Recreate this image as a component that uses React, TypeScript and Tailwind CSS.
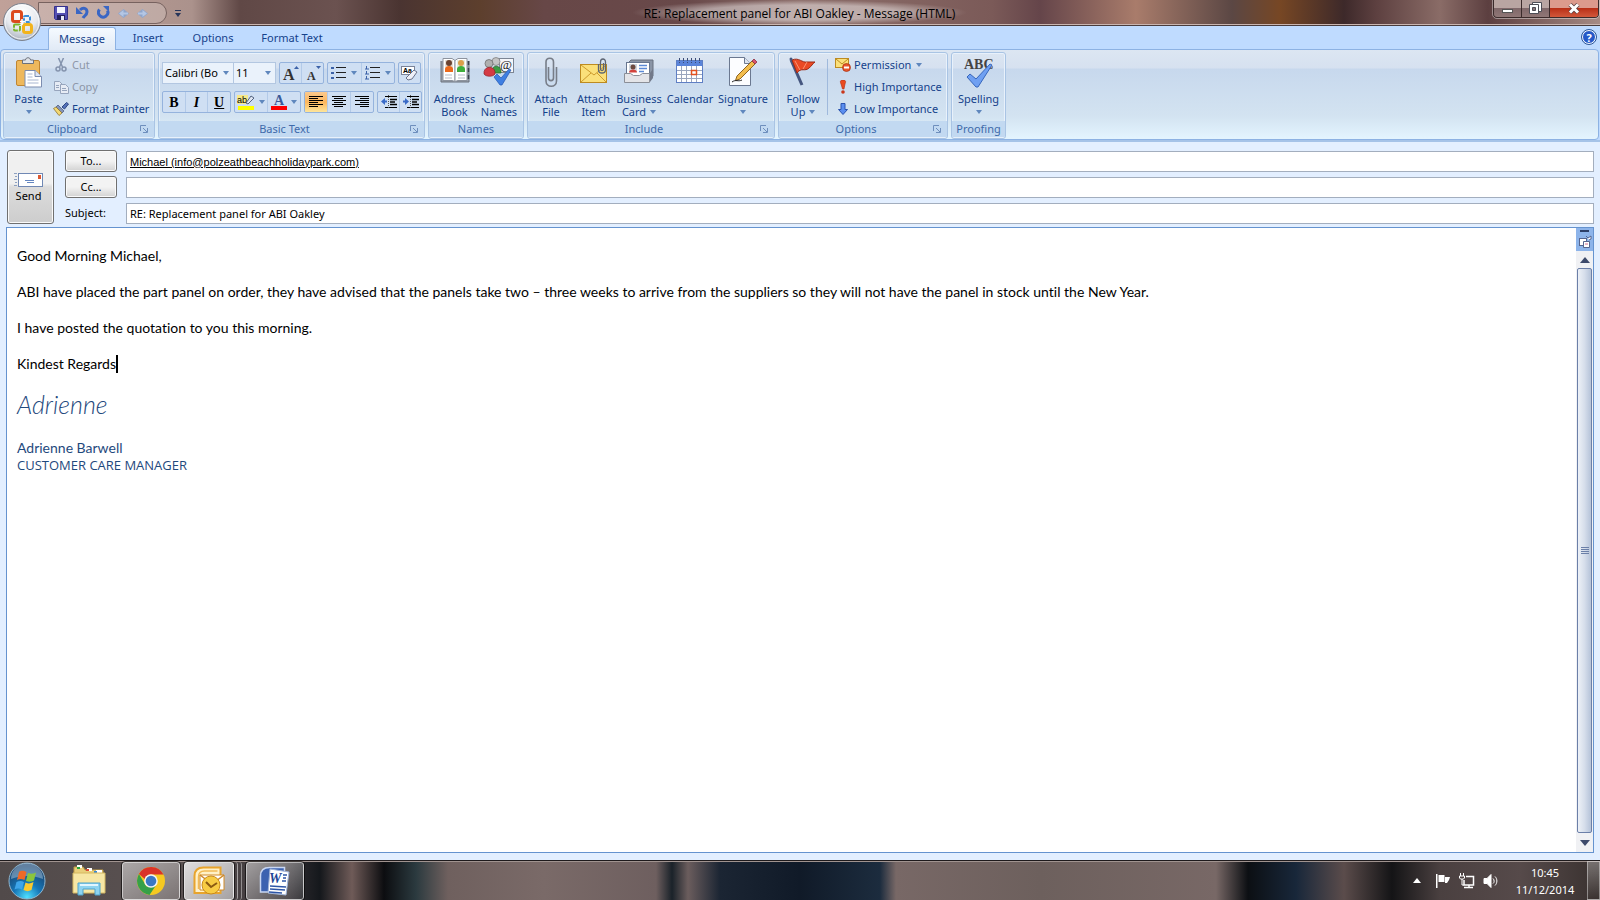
import React from 'react';

type IconProps = { className?: string };

const Caret = ({ className = 'text-[#5f87bd]' }: IconProps) => (
  <svg width="6" height="4" viewBox="0 0 6 4" className={`shrink-0 ${className}`}>
    <path d="M0 0h6L3 4z" fill="currentColor" />
  </svg>
);

const LauncherIcon = () => (
  <svg width="8" height="8" viewBox="0 0 8 8" fill="none" stroke="#6f8fbd">
    <path d="M0.5 6V0.5H6M3 3l4 4M7.500 3v4.500H3" />
  </svg>
);

/* ---------- title bar icons ---------- */

const OfficeOrb = () => (
  <svg width="40" height="40" viewBox="0 0 40 40">
    <defs>
      <radialGradient id="orb" cx="50%" cy="25%" r="75%">
        <stop offset="0" stopColor="#ffffff" />
        <stop offset="0.6" stopColor="#e6e9ee" />
        <stop offset="1" stopColor="#a9b1be" />
      </radialGradient>
    </defs>
    <circle cx="20" cy="20" r="18.500" fill="url(#orb)" stroke="#7c828e" />
    <circle cx="20" cy="20" r="17" fill="none" stroke="#fff" strokeOpacity="0.8" />
    <rect x="10.500" y="9.500" width="9" height="10" rx="2" fill="none" stroke="#dc4a1e" strokeWidth="3" />
    <rect x="22" y="14" width="6" height="6" rx="1" fill="none" stroke="#3d8fd8" strokeWidth="2" strokeDasharray="4 1" />
    <rect x="12" y="22.500" width="6" height="6" rx="1" fill="none" stroke="#7cb52c" strokeWidth="2" strokeDasharray="5 1" />
    <rect x="21.500" y="22.500" width="8" height="8" rx="2" fill="none" stroke="#f2b31c" strokeWidth="3" />
    <path d="M18 19.500h5M20 17v6" stroke="#fff" strokeWidth="1.500" />
  </svg>
);

const SaveIcon = () => (
  <svg width="14" height="14" viewBox="0 0 14 14">
    <path d="M0.500 0.500h13v13h-12l-1-1z" fill="#5550b4" stroke="#35318c" />
    <rect x="3" y="1" width="8" height="6" fill="#f3f5ff" />
    <rect x="3" y="9" width="8" height="5" fill="#23205f" />
    <rect x="7" y="10" width="3" height="4" fill="#e8eaf8" />
  </svg>
);

const UndoIcon = () => (
  <svg width="13" height="14" viewBox="0 0 13 14" fill="none">
    <path d="M4 4c3-3 7-2 7 2 0 3-3 4-4 6" stroke="#3a66c4" strokeWidth="3" />
    <path d="M0 1v7h7z" fill="#3a66c4" />
  </svg>
);

const RedoIcon = () => (
  <svg width="13" height="14" viewBox="0 0 13 14" fill="none">
    <path d="M2.500 3.500A4.700 4.700 0 1 0 10.500 4.500" stroke="#3a66c4" strokeWidth="3" />
    <path d="M6 0h6v6z" fill="#3a66c4" />
  </svg>
);

const DiamondArrow = ({ className = '' }: IconProps) => (
  <svg width="11" height="9" viewBox="0 0 11 9" className={className}>
    <path d="M0 4.500L5.500 0 11 4.500 5.500 9z" fill="#8fa5cb" />
    <path d="M1 4.500L5.500 1v2.500H10v2H5.500V8z" fill="#b4c6e4" />
  </svg>
);

/* ---------- ribbon icons ---------- */

const PasteIcon = () => (
  <svg width="28" height="32" viewBox="0 0 28 32">
    <rect x="1.500" y="3.500" width="23" height="25" rx="1.500" fill="#eeb85c" stroke="#bf8532" />
    <path d="M7.500 6.500V3h3c0-3 5-3 5 0h3v3.500z" fill="#dfe2e7" stroke="#6c717b" />
    <path d="M10 13.500h10l6.500 6V30H10z" fill="#fff" stroke="#7c8db0" />
    <path d="M20 13.500v6h6.500" fill="#dde5f3" stroke="#7c8db0" />
    <path d="M12.500 17h5M12.500 20h5M12.500 23h11M12.500 26h11" stroke="#a8b6d1" />
  </svg>
);

const CutIcon = () => (
  <svg width="12" height="14" viewBox="0 0 12 14" fill="none" stroke="#8493ad" strokeWidth="1.500">
    <path d="M3.500 0l4 9M8.500 0l-4 9" />
    <circle cx="3" cy="11" r="2" />
    <circle cx="9" cy="11" r="2" />
  </svg>
);

const CopyIcon = () => (
  <svg width="15" height="13" viewBox="0 0 15 13" fill="#e7ecf5" stroke="#97a5bd">
    <path d="M0.500 0.500h5l3 3v6h-8z" />
    <path d="M6.500 3.500h5l3 3v6h-8z" />
    <path d="M2 4.500h3M2 6.500h3M8 7.500h4M8 9.500h5" />
  </svg>
);

const PainterIcon = () => (
  <svg width="16" height="14" viewBox="0 0 16 14">
    <path d="M9 5l4.500-4.500 2 1.500-4 5z" fill="#5472b8" stroke="#2d4784" />
    <path d="M5 3l6 6-2 2-6-6z" fill="#8494b8" stroke="#44557d" strokeWidth="0.700" />
    <path d="M3 5l6 6-3 2.500L0.500 6.500z" fill="#f2d873" stroke="#8f7430" strokeWidth="0.800" />
  </svg>
);

const BulletsIcon = ({ numbered = false }: { numbered?: boolean }) => (
  <svg width="16" height="14" viewBox="0 0 16 14">
    {[1, 6, 11].map((y) => (
      <g key={y}>
        {numbered ? (
          <path d={`M1.500 ${y - 1}v3M0 ${y + 2}h4`} stroke="#3c62a8" fill="none" />
        ) : (
          <rect x="0" y={y} width="3" height="2" fill="#3c62a8" />
        )}
        <rect x="5" y={y} width="10" height="1" fill="#222" />
      </g>
    ))}
  </svg>
);

const AlignIcon = ({ align }: { align: 'left' | 'center' | 'right' }) => (
  <svg width="14" height="12" viewBox="0 0 14 12" fill="#000">
    {[0, 2, 4, 6, 8, 10].map((y, i) => {
      const w = i % 2 ? 9 : 14;
      const x = align === 'left' ? 0 : align === 'right' ? 14 - w : (14 - w) / 2;
      return <rect key={y} x={Math.floor(x)} y={y} width={w} height="1" />;
    })}
  </svg>
);

const IndentIcon = ({ out = false }: { out?: boolean }) => (
  <svg width="16" height="14" viewBox="0 0 16 14">
    <path d="M4 1.500h12M4 12.500h12" stroke="#000" />
    <path d="M9 4.500h7M9 7h5M9 9.500h7" stroke="#000" strokeWidth="1.500" />
    <path d="M7.500 0v14" stroke="#555" strokeDasharray="1 1" />
    <path d={out ? 'M0 6.500L4 3v2.500h2v2H4V10z' : 'M6 6.500L2 3v2.500H0v2h2V10z'} fill="#3a6bc8" />
  </svg>
);

const GrowIcon = ({ shrink = false }: { shrink?: boolean }) => (
  <svg width="18" height="18" viewBox="0 0 18 18">
    <text
      x={shrink ? 3 : 1}
      y="16"
      fontSize={shrink ? 12 : 16}
      fontWeight="bold"
      fontFamily="Liberation Serif"
      fill="#333"
    >
      A
    </text>
    <path d={shrink ? 'M12 2h5l-2.500 3z' : 'M12 5h5l-2.500-3z'} fill="#3c62a8" />
  </svg>
);

const ClearIcon = () => (
  <svg width="17" height="16" viewBox="0 0 17 16">
    <rect x="0.500" y="1.500" width="13" height="8" fill="#fff" stroke="#7b8499" />
    <text x="2" y="8" fontSize="7" fontWeight="bold" fontFamily="Liberation Sans">Aa</text>
    <path d="M13 5l3 2-5 7-4 1-2-2z" fill="#eef0f8" stroke="#6a728a" />
  </svg>
);

const HighlightIcon = () => (
  <svg width="18" height="16" viewBox="0 0 18 16" className="overflow-visible">
    <rect x="0" y="1" width="11" height="9" fill="#f7e98a" />
    <text x="0" y="9" fontSize="9" fontFamily="Liberation Sans">ab</text>
    <path d="M9 9l5-7 3 2-6 6z" fill="#dfe6f3" stroke="#53637f" />
    <rect x="1" y="12" width="16" height="4" fill="#ffff00" />
  </svg>
);

const FontColorIcon = () => (
  <svg width="16" height="16" viewBox="0 0 16 16" className="overflow-visible">
    <text x="3" y="11" fontSize="14" fontWeight="bold" fill="#3b5a99" fontFamily="Liberation Serif">A</text>
    <rect x="0" y="12" width="16" height="4" fill="#f00" />
  </svg>
);

const AddressBookIcon = () => (
  <svg width="30" height="28" viewBox="0 0 30 28">
    <path d="M1 4v21h28V4" fill="#9aa2ae" stroke="#6c727c" />
    <path d="M3 1.500h9l3 2v21l-3-1H3z" fill="#fff" stroke="#8d939e" />
    <path d="M27 1.500h-9l-3 2v21l3-1h9z" fill="#fff" stroke="#8d939e" />
    <path d="M28.500 4v4M28.500 11v4M28.500 18v4" stroke="#39404c" strokeWidth="1.500" />
    <rect x="5" y="3" width="8" height="12" fill="#e6e1da" />
    <circle cx="9" cy="6" r="3" fill="#6b4230" />
    <path d="M5 15v-3c0-4 8-4 8 0v3z" fill="#ec6a1c" />
    <rect x="17" y="3" width="8" height="12" fill="#e6ede0" />
    <circle cx="21" cy="6" r="3" fill="#dba04a" />
    <path d="M17 15v-3c0-4 8-4 8 0v3z" fill="#3fae3c" />
    <path d="M5 18h7M5 21h7M18 18h7M18 21h7" stroke="#b4bbc7" />
  </svg>
);

const CheckNamesIcon = () => (
  <svg width="32" height="30" viewBox="0 0 32 30">
    <rect x="16.500" y="1.500" width="14" height="14" fill="#f4f6fa" stroke="#7c8594" />
    <text x="17" y="12" fontSize="13" fontFamily="Liberation Serif" fill="#222">@</text>
    <circle cx="13" cy="4.500" r="4" fill="#c4c4c4" stroke="#777" strokeWidth="0.700" />
    <path d="M8 16c0-9 11-9 10 0z" fill="#3c9c44" stroke="#27692d" strokeWidth="0.700" />
    <circle cx="6" cy="6.500" r="4" fill="#b0b0b0" stroke="#666" strokeWidth="0.700" />
    <path d="M1 17c-1-9 12-9 11 0-2 3-9 3-11 0z" fill="#d43a44" stroke="#8e232b" strokeWidth="0.700" />
    <path d="M11 20l3-3 4 4 8-9 2 1-9 15h-2z" fill="#3f7fe2" stroke="#2457b0" strokeWidth="0.700" />
  </svg>
);

const PaperclipIcon = () => (
  <svg width="14" height="31" viewBox="0 0 14 31" fill="none" stroke="#777d88" strokeWidth="1.600">
    <path d="M4.500 10v11c0 3.500 5 3.500 5 0V5c0-5-7.500-5-7.500 0v19c0 7 10.500 7 10.500 0V10" />
  </svg>
);

const AttachItemIcon = () => (
  <svg width="28" height="28" viewBox="0 0 28 28">
    <rect x="0.500" y="7.500" width="26" height="18" fill="#fbe07a" stroke="#bd8b21" />
    <path d="M1 8l13 10L26 8M1 25l10-9M26 25l-9-9" fill="none" stroke="#cd9a2c" />
    <path d="M18.500 7v6c0 4 7 4 7 0V5c0-4-5-4-5 0v7c0 2 3 2 3 0V6" fill="none" stroke="#5d6573" strokeWidth="1.300" />
  </svg>
);

const BusinessCardIcon = () => (
  <svg width="30" height="28" viewBox="0 0 30 28">
    <path d="M4 6l3-3h22v16l-4 5H4z" fill="#8b95a6" stroke="#69717f" />
    <rect x="2.500" y="5.500" width="23" height="14" fill="#fff" stroke="#67768f" />
    <rect x="5" y="7" width="8" height="8" fill="#cfd5de" />
    <circle cx="9" cy="10" r="2.500" fill="#6b4a40" />
    <path d="M5 15.500c0-4 8-4 8 0z" fill="#d3433c" />
    <path d="M15 8.500h8M15 11.500h8M15 14.500h5" stroke="#5c8ad6" strokeWidth="1.500" />
    <path d="M0.500 16.500h6l3 2h6l3-2h7v9h-25z" fill="#e3e4e8" stroke="#8b8f98" />
    <path d="M26 16l3-4v9l-3 4z" fill="#72798a" />
  </svg>
);

const CalendarIcon = () => (
  <svg width="28" height="27" viewBox="0 0 28 27">
    <rect x="0.500" y="3.500" width="26" height="22" fill="#fff" stroke="#5f7fc4" />
    <rect x="1" y="4" width="25" height="5" fill="#5b84da" />
    <path d="M3.500 1v5M7.500 1v5M11.500 1v5M15.500 1v5M19.500 1v5M23.500 1v5" stroke="#3d4e78" strokeDasharray="3 1" />
    <path d="M1 13.500h25M1 17.500h25M1 21.500h25M5.500 9v16M10.500 9v16M15.500 9v16M20.500 9v16" stroke="#9aa6be" />
    <rect x="15.500" y="13.500" width="5" height="4" fill="#fff" stroke="#e2501d" strokeWidth="1.500" />
  </svg>
);

const SignatureIcon = () => (
  <svg width="30" height="30" viewBox="0 0 30 30">
    <path d="M1.500 0.500h15l6 6v22h-21z" fill="#fcfdff" stroke="#6b7890" />
    <path d="M16.500 0.500v6h6" fill="#dce3ef" stroke="#6b7890" />
    <path d="M9 19L24 4l3 3-15 15-4.500 1.500z" fill="#f3bd4d" stroke="#8f6520" />
    <path d="M24 4l2-2 3 3-2 2z" fill="#d9546c" stroke="#8a2f43" strokeWidth="0.800" />
    <path d="M4 25c4-3 6 0 10-2" stroke="#222" fill="none" />
  </svg>
);

const FlagIcon = () => (
  <svg width="28" height="29" viewBox="0 0 28 29">
    <path d="M2 3l11 25" stroke="#45567f" strokeWidth="3" />
    <path d="M3 3c7-3 10 3 15 2l8 0c-3 2-3 4-6 6-4 4-8-1-12 5z" fill="#ea4a25" stroke="#9c2a16" />
    <path d="M6 4l5 9M18 5l-4 7" stroke="#f99474" fill="none" />
    <circle cx="2" cy="2" r="1.500" fill="#45567f" />
  </svg>
);

const PermissionIcon = () => (
  <svg width="16" height="14" viewBox="0 0 16 14">
    <rect x="0.500" y="0.500" width="13" height="9" fill="#fbe07a" stroke="#bd8b21" />
    <path d="M1 1l6 5 6-5" fill="none" stroke="#bd8b21" />
    <circle cx="11.500" cy="9.500" r="4" fill="#e8552c" stroke="#a33113" strokeWidth="0.700" />
    <rect x="9" y="8.500" width="5" height="2" fill="#fff" />
  </svg>
);

const HighIcon = () => (
  <svg width="16" height="14" viewBox="0 0 16 14">
    <path d="M8 0c3 0 3 2 2 4L9 9H7.500L6 4C5 2 5 0 8 0z" fill="#ea4b20" stroke="#b22c0d" strokeWidth="0.600" />
    <circle cx="8" cy="12" r="1.800" fill="#c9361a" />
  </svg>
);

const LowIcon = () => (
  <svg width="16" height="14" viewBox="0 0 16 14">
    <path d="M6 1.500h4v6h2.500L8 12.500 3.500 7.500H6z" fill="#5a8ef0" stroke="#2a53ae" />
  </svg>
);

const SpellingIcon = () => (
  <svg width="32" height="32" viewBox="0 0 32 32" className="overflow-visible">
    <text x="1" y="12" fontSize="14" fontWeight="bold" fontFamily="Liberation Serif" fill="#444">ABC</text>
    <path d="M4 20l3-3 6 5L27 7l2 1-14 22h-2z" fill="#6fa0f2" stroke="#3767bd" />
  </svg>
);

const SendIcon = () => (
  <svg width="30" height="15" viewBox="0 0 30 15">
    <path d="M0 0.500h3M1 3.500h2M0 6.500h3M1 9.500h2M0 12.500h3" stroke="#8da0c0" />
    <rect x="4.500" y="0.500" width="24" height="13" fill="#fff" stroke="#7088b4" />
    <rect x="24" y="2" width="3" height="4" fill="#dd5a33" />
    <path d="M11 7.500h9M13 9.500h7" stroke="#6486c0" />
  </svg>
);

const BrowseIcon = () => (
  <svg width="14" height="14" viewBox="0 0 14 14" fill="#fff" stroke="#55658f">
    <rect x="1.500" y="3.500" width="7" height="7" />
    <path d="M5.500 6.500h6v6h-6zM8 1l2 2 3-2v3l-2 1" />
    <path d="M7 9h3" stroke="#d06a8c" />
  </svg>
);

/* ---------- taskbar icons ---------- */

const StartOrb = () => (
  <svg width="38" height="38" viewBox="0 0 38 38">
    <defs>
      <radialGradient id="start" cx="50%" cy="95%" r="85%">
        <stop offset="0" stopColor="#4fe0ff" />
        <stop offset="0.450" stopColor="#1677b8" />
        <stop offset="1" stopColor="#1a3f6a" />
      </radialGradient>
    </defs>
    <circle cx="19" cy="19" r="18" fill="url(#start)" stroke="#8fb6cf" />
    <path d="M3 17a16 16 0 0 1 32 0c-10-4-22-4-32 0z" fill="#cfe6f5" fillOpacity="0.400" />
    <path d="M11 10c3-2 5-1 7.500 0l-2 8c-3-1.500-5-1.500-7.500 0z" fill="#ee6a28" />
    <path d="M20 11c3 1 5 1 8-0.500l-2 8c-3 1.500-5 1.500-8 0.500z" fill="#8ac63c" />
    <path d="M8.500 20c3-1.500 5-1.500 7.500 0l-2 7.500c-2.500-1.500-5-1.500-7.500 0z" fill="#3ea5ea" />
    <path d="M17.500 20.500c3 1.500 5 1 8-0.500l-2 8c-3 1.500-5 1.500-8 0z" fill="#fcc92e" />
  </svg>
);

const ExplorerIcon = () => (
  <svg width="34" height="32" viewBox="0 0 34 32">
    <path d="M2 4V2h9l2 3h18v22H2z" fill="#e9cf7b" stroke="#bf9c45" />
    <path d="M5 1.500h5M15 4.500h5M24 6.500h6" stroke="#fff" strokeWidth="3" />
    <path d="M5 3h3" stroke="#2ba33b" strokeWidth="2" />
    <path d="M14 5h3" stroke="#dc4a35" strokeWidth="2" />
    <path d="M22 7h3" stroke="#3588d8" strokeWidth="2" />
    <path d="M1 8h32v20H1z" fill="#f7e7a5" stroke="#d4b862" />
    <path d="M6 30V18h22v12h-5v-6H11v6z" fill="#8ed4f0" stroke="#4fa2cb" />
    <path d="M8 20h18" stroke="#e1f6ff" strokeWidth="2" />
  </svg>
);

const ChromeIcon = () => (
  <svg width="30" height="30" viewBox="0 0 30 30">
    <circle cx="15" cy="15" r="14" fill="#f6c921" />
    <path d="M2.900 8A14 14 0 0 1 27.500 8.500H15a6.500 6.500 0 0 0-6.200 4.500z" fill="#da3328" />
    <path d="M2.900 8A14 14 0 0 0 13.500 28.900L19.500 20l-9 0.500z" fill="#36a048" />
    <circle cx="15" cy="15" r="6.800" fill="#f4f4f4" />
    <circle cx="15" cy="15" r="5.300" fill="#3b78c4" />
  </svg>
);

const OutlookIcon = () => (
  <svg width="32" height="30" viewBox="0 0 32 30">
    <path d="M1.500 27V10c0-5 3-8.500 9-8.500h17V27z" fill="#fff1c8" stroke="#e8a42c" strokeWidth="2" />
    <path d="M5.500 23V11c0-4 2-6 6-6h13" fill="none" stroke="#f2bb55" strokeWidth="1.500" />
    <path d="M7 9h24v15H7z" fill="#fff" stroke="#d08a29" />
    <path d="M7 9l12 9L31 9" fill="none" stroke="#d08a29" strokeWidth="1.500" />
    <circle cx="18" cy="19" r="9" fill="#f8cc44" stroke="#c98a1a" />
    <path d="M13 16l5 5 6-4" fill="none" stroke="#8b5a12" strokeWidth="2" />
  </svg>
);

const WordIcon = () => (
  <svg width="32" height="30" viewBox="0 0 32 30">
    <path d="M1.500 26V10c0-5 3-8.500 9-8.500h15V26z" fill="#3c62b0" stroke="#c8d6f2" strokeWidth="1.500" />
    <path d="M11 3l19 3-3 23-18-2z" fill="#fff" stroke="#9fb3d8" />
    <text x="10" y="17" fontSize="14" fontWeight="bold" fontStyle="italic" fontFamily="Liberation Serif" fill="#1e4596">W</text>
    <path d="M24 9h4M24 12h3M23 15h4M11 20l16 1M11 23l15 1M10 26l13 1" stroke="#2d55a6" strokeWidth="1.500" />
  </svg>
);

const TrayFlag = () => (
  <svg width="16" height="16" viewBox="0 0 16 16" fill="#fff">
    <path d="M1 1h1.500v14H1zM3.500 2h6v7h-6zM10 4h5l-1 3-2 3H10z" />
  </svg>
);

const TrayNetwork = () => (
  <svg width="16" height="16" viewBox="0 0 16 16" fill="none" stroke="#fff" strokeWidth="1.500">
    <path d="M7 3.500h7.500v8.500H5V7" />
    <path d="M5 14.500h9M10 12v2" />
    <path d="M1.500 0v3M4.500 0v3M0.500 3h5v2c0 1.500-5 1.500-5 0zM3 6v6h2" strokeWidth="1" />
  </svg>
);

const TraySpeaker = () => (
  <svg width="16" height="16" viewBox="0 0 16 16" fill="none" stroke="#fff">
    <path d="M1 5.500h3l4-4v13l-4-4H1z" fill="#fff" />
    <path d="M10 5.500c1.500 1.500 1.500 4 0 5M12 3.500c2.500 2.500 2.500 6.500 0 9" />
  </svg>
);

/* ---------- ribbon building blocks ---------- */

interface GroupProps {
  label: string;
  className: string;
  launcher?: boolean;
  children: React.ReactNode;
}

const RibbonGroup: React.FC<GroupProps> = ({ label, className, launcher, children }) => (
  <section
    aria-label={label}
    className={`flex flex-col shrink-0 rounded-[3px] border border-[#a9c4e4] shadow-[inset_0_0_0_1px_#e8f1fb] overflow-hidden ${className}`}
  >
    <div className="h-[68px] flex">{children}</div>
    <div className="h-4 flex items-center bg-[#c2d9f1] text-[#3e6aaa] text-center">
      <span className="flex-1">{label}</span>
      {launcher && (
        <button aria-label={`${label} dialog`} className="w-[14px] flex">
          <LauncherIcon />
        </button>
      )}
    </div>
  </section>
);

interface BigButtonProps {
  icon: React.ReactNode;
  lines: string[];
  className: string;
  caret?: 'below' | 'inline';
}

const BigButton: React.FC<BigButtonProps> = ({ icon, lines, className, caret }) => (
  <button className={`flex flex-col items-center shrink-0 pt-1 whitespace-nowrap leading-[13px] ${className}`}>
    <span className="h-[35px] flex items-start">{icon}</span>
    {lines.map((line, i) => (
      <span key={line} className="flex items-center gap-1">
        {line}
        {caret === 'inline' && i === lines.length - 1 && <Caret />}
      </span>
    ))}
    {caret === 'below' && <span className="h-[13px] flex items-center"><Caret /></span>}
  </button>
);

interface SmallButtonProps {
  icon: React.ReactNode;
  label: string;
  disabled?: boolean;
  caret?: boolean;
}

const SmallButton: React.FC<SmallButtonProps> = ({ icon, label, disabled, caret }) => (
  <button disabled={disabled} className="h-[22px] flex items-center gap-[3px] whitespace-nowrap disabled:text-[#8d97a8]">
    <span className="w-4 flex justify-center">{icon}</span>
    {label}
    {caret && <span className="pl-[2px]"><Caret /></span>}
  </button>
);

const ToolStrip = ({ children, className = '' }: { children: React.ReactNode; className?: string }) => (
  <div className={`h-[22px] flex shrink-0 rounded-[2px] border border-[#95b3dd] bg-[#cfdff3] divide-x divide-[#b3cae8] overflow-hidden ${className}`}>
    {children}
  </div>
);

interface ToolProps {
  label: string;
  children: React.ReactNode;
  active?: boolean;
}

const Tool: React.FC<ToolProps> = ({ label, children, active }) => (
  <button
    aria-label={label}
    title={label}
    className={`flex-1 flex items-center justify-center gap-1 ${active ? 'bg-linear-to-b from-[#fbc98d] via-[#fbb65d] to-[#fde59a]' : ''}`}
  >
    {children}
  </button>
);

const Combo = ({ label, value, className }: { label: string; value: string; className: string }) => (
  <div className={`relative h-[22px] border border-[#b3c7e1] bg-[#eaf2fb] ${className}`}>
    <select aria-label={label} className="appearance-none w-full h-full pl-[2px] pr-2 bg-transparent text-black outline-none">
      <option>{value}</option>
    </select>
    <span className="absolute right-1 top-2 pointer-events-none"><Caret /></span>
  </div>
);

/* ---------- window parts ---------- */

const TitleBar = () => (
  <header className="relative h-[26px] flex items-start justify-between border-b border-[#4a3c3c] shadow-[inset_0_-1px_0_#c9b5b0] bg-[linear-gradient(90deg,#c0a199_0,#b39790_8%,#ab928c_12%,#604846_15%,#6b5250_21%,#4a3431_25%,#5d3f2d_30%,#674747_34%,#69494a_43%,#8d6f6b_50%,#7b5a58_62%,#65454a_65%,#a97c6b_71%,#5b4744_77%,#774724_80%,#3d292a_84%,#5d4040_86%,#8a6c67_90%,#5c3f40_93%,#7d605d_96%,#a58a84_100%)]">
    <div className="absolute left-[2px] top-[2px] z-10 rounded-full">
      <button aria-label="Office Button" className="block"><OfficeOrb /></button>
    </div>
    <div className="flex-1 flex items-center h-[26px]">
      <div className="ml-[38px] w-[129px] h-[22px] pl-[15px] flex items-center gap-2 rounded-r-full border border-[#77625f] bg-white/20">
        <button aria-label="Save"><SaveIcon /></button>
        <button aria-label="Undo"><UndoIcon /></button>
        <button aria-label="Redo"><RedoIcon /></button>
        <button aria-label="Previous Item"><DiamondArrow /></button>
        <button aria-label="Next Item"><DiamondArrow className="rotate-180" /></button>
      </div>
      <button aria-label="Customize Quick Access Toolbar" className="ml-2 flex flex-col items-center gap-[2px]">
        <span className="w-[6px] h-px bg-[#26345a]" />
        <Caret className="text-[#26345a]" />
      </button>
    </div>
    <h1 className="h-[25px] px-3 pt-[2px] flex items-center font-['Open_Sans','Noto_Sans',sans-serif] text-[12px] text-black bg-[radial-gradient(closest-side,rgba(255,255,255,0.45)_60%,transparent)]">
      RE: Replacement panel for ABI Oakley - Message (HTML)
    </h1>
    <div className="flex-1 flex justify-end pr-px">
      <div className="h-[18px] flex rounded-b-[4px] border border-t-0 border-[#3b2b2b] outline outline-white/40 overflow-hidden divide-x divide-[#3b2b2b] bg-linear-to-b from-[#b9a5a2] from-45% via-[#80686a] via-50% to-[#907776]">
        <button aria-label="Minimize" className="w-7 flex items-center justify-center">
          <span className="mt-1 w-[11px] h-[4px] bg-white border border-[#555]" />
        </button>
        <button aria-label="Restore" className="w-7 flex items-center justify-center">
          <svg width="13" height="13" viewBox="0 0 13 13" fill="#fff" stroke="#4d4d55">
            <path d="M3.500 0.500h9v9h-9z" />
            <path d="M0.500 2.500h9v9h-9z" />
            <path d="M3.500 5.500h3v3h-3z" fill="#8b7576" />
          </svg>
        </button>
        <button aria-label="Close" className="w-12 flex items-center justify-center bg-linear-to-b from-[#dc9a8c] from-45% via-[#b92f16] via-50% to-[#d2573a]">
          <svg width="12" height="11" viewBox="0 0 12 11">
            <path d="M2 1.500l8 8M10 1.500l-8 8" stroke="#5b4040" strokeWidth="4.500" />
            <path d="M2 1.500l8 8M10 1.500l-8 8" stroke="#fff" strokeWidth="3" />
          </svg>
        </button>
      </div>
    </div>
  </header>
);

const TabRow = () => (
  <nav role="tablist" className="h-[23px] flex items-end pl-[48px] pr-1 bg-[#bfdbff] text-[11px] text-[#15428b]">
    <button role="tab" aria-selected className="relative z-1 h-[23px] w-[68px] -mb-px rounded-t-[3px] border border-b-0 border-[#8db2e3] bg-linear-to-b from-[#f5faff] to-[#e1eaf6]">
      Message
    </button>
    <button role="tab" className="h-[21px] w-[64px]">Insert</button>
    <button role="tab" className="h-[21px] w-[66px]">Options</button>
    <button role="tab" className="h-[21px] w-[92px]">Format Text</button>
    <button aria-label="Help" className="ml-auto mb-[5px] size-[14px] rounded-full border border-white bg-[#2458c8] outline outline-[#2b5596] text-white text-[11px] leading-none font-bold">
      ?
    </button>
  </nav>
);

const Ribbon = () => (
  <div className="bg-[#bfdbff] border-b-2 border-[#a5c3e8] pr-px">
    <div className="h-[91px] flex gap-[3px] pt-[2px] pl-[2px] rounded-[4px] border border-[#8db2e3] overflow-hidden text-[#15428b] text-[11px] bg-[linear-gradient(180deg,#dce6f2_0,#d6e1f0_18px,#c7d8ed_19px,#d3e3f1_66px,#e3f4fe_88px)]">
      <RibbonGroup label="Clipboard" launcher className="w-[152px]">
        <BigButton icon={<PasteIcon />} lines={['Paste']} caret="below" className="w-[49px]" />
        <div className="flex flex-col pt-[1px]">
          <SmallButton icon={<CutIcon />} label="Cut" disabled />
          <SmallButton icon={<CopyIcon />} label="Copy" disabled />
          <SmallButton icon={<PainterIcon />} label="Format Painter" />
        </div>
      </RibbonGroup>

      <RibbonGroup label="Basic Text" launcher className="w-[267px]">
        <div className="flex-1 flex flex-col gap-[7px] px-[3px] pt-[9px]">
          <div className="flex gap-[3px]">
            <div className="flex">
              <Combo label="Font" value="Calibri (Bo" className="w-[72px]" />
              <Combo label="Font size" value="11" className="w-[42px] border-l-0" />
            </div>
            <ToolStrip className="w-[45px]">
              <Tool label="Grow Font"><GrowIcon /></Tool>
              <Tool label="Shrink Font"><GrowIcon shrink /></Tool>
            </ToolStrip>
            <ToolStrip className="w-[68px]">
              <Tool label="Bullets"><BulletsIcon /><Caret /></Tool>
              <Tool label="Numbering"><BulletsIcon numbered /><Caret /></Tool>
            </ToolStrip>
            <ToolStrip className="w-[23px]">
              <Tool label="Clear Formatting"><ClearIcon /></Tool>
            </ToolStrip>
          </div>
          <div className="flex gap-[3px]">
            <ToolStrip className="w-[69px] font-['Liberation_Serif'] text-[14px] text-black">
              <Tool label="Bold"><b>B</b></Tool>
              <Tool label="Italic"><i className="font-bold">I</i></Tool>
              <Tool label="Underline"><u className="font-bold">U</u></Tool>
            </ToolStrip>
            <ToolStrip className="w-[67px]">
              <Tool label="Highlight"><HighlightIcon /><Caret /></Tool>
              <Tool label="Font Color"><FontColorIcon /><Caret /></Tool>
            </ToolStrip>
            <ToolStrip className="w-[70px]">
              <Tool label="Align Left" active><AlignIcon align="left" /></Tool>
              <Tool label="Center"><AlignIcon align="center" /></Tool>
              <Tool label="Align Right"><AlignIcon align="right" /></Tool>
            </ToolStrip>
            <ToolStrip className="w-[45px]">
              <Tool label="Decrease Indent"><IndentIcon out /></Tool>
              <Tool label="Increase Indent"><IndentIcon /></Tool>
            </ToolStrip>
          </div>
        </div>
      </RibbonGroup>

      <RibbonGroup label="Names" className="w-[96px]">
        <BigButton icon={<AddressBookIcon />} lines={['Address', 'Book']} className="w-[51px]" />
        <BigButton icon={<CheckNamesIcon />} lines={['Check', 'Names']} className="w-[38px]" />
      </RibbonGroup>

      <RibbonGroup label="Include" launcher className="w-[248px]">
        <BigButton icon={<PaperclipIcon />} lines={['Attach', 'File']} className="w-[46px]" />
        <BigButton icon={<AttachItemIcon />} lines={['Attach', 'Item']} className="w-[39px]" />
        <BigButton icon={<BusinessCardIcon />} lines={['Business', 'Card']} caret="inline" className="w-[52px]" />
        <BigButton icon={<CalendarIcon />} lines={['Calendar']} className="w-[50px]" />
        <BigButton icon={<SignatureIcon />} lines={['Signature']} caret="below" className="w-[56px]" />
      </RibbonGroup>

      <RibbonGroup label="Options" launcher className="w-[170px]">
        <BigButton icon={<FlagIcon />} lines={['Follow', 'Up']} caret="inline" className="w-[48px]" />
        <div className="w-px my-[6px] mr-[7px] bg-[#9fb9dc]" />
        <div className="flex flex-col pt-[1px]">
          <SmallButton icon={<PermissionIcon />} label="Permission" caret />
          <SmallButton icon={<HighIcon />} label="High Importance" />
          <SmallButton icon={<LowIcon />} label="Low Importance" />
        </div>
      </RibbonGroup>

      <RibbonGroup label="Proofing" className="w-[55px]">
        <BigButton icon={<SpellingIcon />} lines={['Spelling']} caret="below" className="w-[53px]" />
      </RibbonGroup>
    </div>
  </div>
);

const fieldButton =
  'h-[22px] w-[52px] rounded-[3px] border border-[#707070] bg-linear-to-b from-[#f3f3f3] from-50% to-[#d2d2d2] shadow-[inset_0_0_0_1px_#fafafa]';
const fieldInput = 'h-[21px] w-full px-[3px] border border-[#a3aebe] bg-white text-black outline-none';

const MessageHeader = () => (
  <div className="flex gap-[11px] pt-2 pl-[7px] pr-[6px] pb-[3px] text-[11px] text-black">
    <button className="w-[47px] h-[74px] pt-1 pr-1 flex flex-col items-center justify-center rounded-[3px] border border-[#707070] bg-linear-to-b from-[#f0f0f0] from-45% via-[#dcdcdc] via-50% to-[#cdcdcd] shadow-[inset_0_0_0_1px_#fafafa]">
      <SendIcon />
      Send
    </button>
    <div className="flex-1 grid grid-cols-[52px_1fr] grid-rows-[22px_22px_22px] items-end gap-x-[9px] gap-y-1 content-start">
      <button id="to" className={fieldButton}>To...</button>
      <input
        aria-labelledby="to"
        readOnly
        defaultValue="Michael (info@polzeathbeachholidaypark.com)"
        className={`${fieldInput} font-['Liberation_Sans',sans-serif] underline`}
      />
      <button id="cc" className={fieldButton}>Cc...</button>
      <input aria-labelledby="cc" className={fieldInput} />
      <label htmlFor="subject" className="self-center">Subject:</label>
      <input id="subject" defaultValue="RE: Replacement panel for ABI Oakley" className={fieldInput} />
    </div>
  </div>
);

const ScrollBar = () => (
  <div className="w-[17px] shrink-0 flex flex-col items-center bg-[#f0f1f4]">
    <button aria-label="Ruler" className="w-full h-[23px] flex flex-col items-center gap-[3px] pt-[2px] bg-[#8db4ea]">
      <span className="w-[9px] h-[2px] shrink-0 bg-[#2c3f68]" />
      <BrowseIcon />
    </button>
    <button aria-label="Scroll up" className="h-[17px] flex items-center">
      <svg width="10" height="6" viewBox="0 0 10 6"><path d="M0 6h10L5 0z" fill="#3d4a6b" /></svg>
    </button>
    <div className="flex-1 w-[15px] flex flex-col items-center justify-center gap-px rounded-[2px] border border-[#6b7fa8] bg-linear-to-r from-[#edf1f7] via-[#d6deeb] to-[#b5c3d9]">
      <span className="w-2 h-px bg-[#6b7fa8]" />
      <span className="w-2 h-px bg-[#6b7fa8]" />
      <span className="w-2 h-px bg-[#6b7fa8]" />
      <span className="w-2 h-px bg-[#6b7fa8]" />
    </div>
    <button aria-label="Scroll down" className="h-[19px] flex items-center">
      <svg width="10" height="6" viewBox="0 0 10 6"><path d="M0 0h10L5 6z" fill="#3d4a6b" /></svg>
    </button>
  </div>
);

const MessageBody = () => (
  <main className="flex-1 flex mx-[6px] mb-[7px] border border-[#6593cf] bg-white">
    <div className="flex-1 pl-[10px] pt-[19px] font-['Lato','Open_Sans',sans-serif] [font-variant-ligatures:none] text-[14px] leading-[18px] text-black">
      <p className="mb-[18px]">Good Morning Michael,</p>
      <p className="mb-[18px]">
        ABI have placed the part panel on order, they have advised that the panels take two – three weeks to arrive from the suppliers so they will not have the panel in stock until the New Year.
      </p>
      <p className="mb-[18px]">I have posted the quotation to you this morning.</p>
      <p className="flex">Kindest Regards<span className="w-[2px] h-[18px] bg-black" /></p>
      <p className="mt-4 mb-5 font-light italic text-[25px] leading-[30px] text-[#1f497d]">Adrienne</p>
      <p className="text-[#1f497d]">Adrienne Barwell</p>
      <p className="font-['Open_Sans','Noto_Sans',sans-serif] text-[13px] leading-4 text-[#1f497d]">CUSTOMER CARE MANAGER</p>
    </div>
    <ScrollBar />
  </main>
);

const taskButton = 'h-[38px] flex items-center justify-center rounded-[3px] border border-white/60 outline outline-black/60';

const Taskbar = () => (
  <footer className="h-10 flex items-center border-t border-[#1e1a1c] shadow-[inset_0_1px_0_#a0938f] text-white bg-[linear-gradient(90deg,#514a4a_0,#5b5252_12%,#332f33_18%,#15181c_20%,#6f5b58_22%,#0c0d10_24%,#2b3a3f_26%,#6f605e_28%,#7a6a68_34%,#6e5f5f_41%,#1a2229_42%,#6b5d5d_43%,#1b2533_45%,#101a28_50%,#1c2c3e_55%,#786866_56%,#6d605d_65%,#786866_76%,#0c0f13_78%,#18273a_81%,#5b4c4b_84%,#141416_87%,#4a4040_90%,#564a4a_95%,#39312f_100%)]">
    <button aria-label="Start" className="ml-2 shrink-0"><StartOrb /></button>
    <button aria-label="Windows Explorer" className="ml-[26px]"><ExplorerIcon /></button>
    <div className="flex ml-4 gap-1">
      <button aria-label="Chrome" className={`${taskButton} w-[58px] bg-linear-to-br from-white/50 to-white/20`}><ChromeIcon /></button>
      <div className="flex">
        <button aria-label="Outlook" className={`${taskButton} w-[50px] bg-linear-to-br from-white/80 to-white/50`}><OutlookIcon /></button>
        <span className="w-1 h-[38px] rounded-r-[3px] border-r border-white/50" />
        <span className="w-1 h-[38px] rounded-r-[3px] border-r border-white/40" />
      </div>
      <button aria-label="Word" className={`${taskButton} w-[58px] bg-linear-to-br from-white/50 to-white/10`}><WordIcon /></button>
    </div>
    <div className="ml-auto h-full flex items-center">
      <button aria-label="Show hidden icons" className="mr-[14px]">
        <svg width="8" height="5" viewBox="0 0 8 5"><path d="M0 5h8L4 0z" fill="#fff" /></svg>
      </button>
      <div className="flex gap-2">
        <button aria-label="Action Center"><TrayFlag /></button>
        <button aria-label="Network"><TrayNetwork /></button>
        <button aria-label="Volume"><TraySpeaker /></button>
      </div>
      <div className="ml-1 w-[84px] text-center text-[11px] leading-[17px]">
        <div>10:45</div>
        <div>11/12/2014</div>
      </div>
      <button aria-label="Show desktop" className="w-[13px] h-full border border-white/40 bg-linear-to-b from-white/30 to-transparent" />
    </div>
  </footer>
);

export default function App() {
  return (
    <div className="min-h-screen flex flex-col bg-[#e3efff] font-['Noto_Sans','Open_Sans',sans-serif]">
      <TitleBar />
      <TabRow />
      <Ribbon />
      <MessageHeader />
      <MessageBody />
      <Taskbar />
    </div>
  );
}
